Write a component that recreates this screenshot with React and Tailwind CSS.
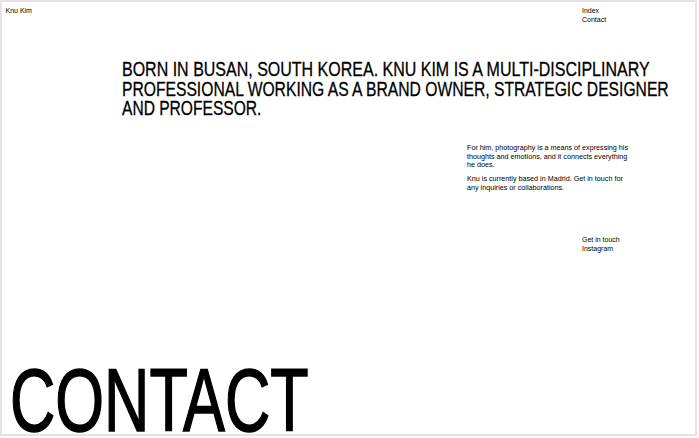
export default function App() {
  const sans = { fontFamily: '"Liberation Sans", Arial, sans-serif' }

  return (
    <div className="w-[699px] h-[438px] bg-white overflow-hidden">
      <div className="w-[697px] h-[436px] border-2 border-[#e4e4e4] flex flex-col text-black overflow-hidden" style={sans}>
        <header className="flex pt-[3.5px] text-[7px] leading-[9px]">
          <div className="pl-[3.5px] w-[580px]">Knu Kim</div>
          <nav className="flex flex-col">
            <a>Index</a>
            <a>Contact</a>
          </nav>
        </header>

        {/* condensed look: Arial squeezed per line */}
        <h1 className="pl-[120px] pt-[35.5px] text-[21px] leading-[19.5px] uppercase whitespace-nowrap [-webkit-text-stroke:0.3px_black]">
          <span className="block origin-left scale-x-[0.762]">Born in Busan, South Korea. Knu Kim is a multi-disciplinary</span>
          <span className="block origin-left scale-x-[0.746]">professional working as a brand owner, strategic designer</span>
          <span className="block origin-left scale-x-[0.742]">and professor.</span>
        </h1>

        <div className="ml-[465px] pt-[26.5px] w-[168px] text-[7.2px] leading-[8.5px] flex flex-col gap-[5.5px]">
          <p>For him, photography is a means of expressing his thoughts and emotions, and it connects everything he does.</p>
          <p>Knu is currently based in Madrid. Get in touch for any inquiries or collaborations.</p>
        </div>

        <div className="pl-[580px] pt-[42.5px] text-[7px] leading-[9px] flex flex-col">
          <a>Get in touch</a>
          <a>Instagram</a>
        </div>

        <div className="mt-auto pl-[8px] text-[89px] leading-[68px] uppercase whitespace-nowrap [-webkit-text-stroke:1.5px_black]">
          <span className="block origin-left scale-x-[0.705]">Contact</span>
        </div>
      </div>
    </div>
  )
}
